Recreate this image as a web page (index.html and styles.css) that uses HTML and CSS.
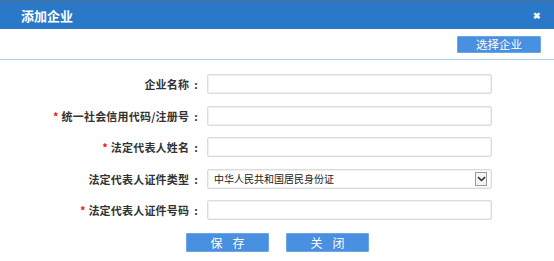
FILE: index.html
```html
<!DOCTYPE html>
<html>
<head>
    <meta charset="UTF-8">
    <title>添加企业</title>
    <link rel="stylesheet" href="styles.css">
</head>
<body>
    <div class="dialog">
        <!-- Title bar -->
        <div class="titlebar">
            <span class="title">添加企业</span>
            <span class="close">&#10006;</span>
        </div>

        <!-- Toolbar -->
        <div class="toolbar">
            <button class="btn btn-pick">选择企业</button>
        </div>

        <!-- Form -->
        <form class="form">
            <label class="label">企业名称<span class="colon">:</span></label>
            <input class="field" type="text">

            <label class="label"><span class="req">*</span> 统一社会信用代码/注册号<span class="colon">:</span></label>
            <input class="field" type="text">

            <label class="label"><span class="req">*</span> 法定代表人姓名<span class="colon">:</span></label>
            <input class="field" type="text">

            <label class="label">法定代表人证件类型<span class="colon">:</span></label>
            <div class="field select">
                <span>中华人民共和国居民身份证</span>
                <span class="arrow">
                    <svg width="9" height="6" viewBox="0 0 9 6"><path d="M1 1.2 L4.5 4.5 L8 1.2" fill="none" stroke="#333" stroke-width="1.6"/></svg>
                </span>
            </div>

            <label class="label"><span class="req">*</span> 法定代表人证件号码<span class="colon">:</span></label>
            <input class="field" type="text">
        </form>

        <div class="actions">
            <button class="btn btn-main">保存</button>
            <button class="btn btn-main">关闭</button>
        </div>
    </div>
</body>
</html>
```

FILE: styles.css
```css
body {
    margin: 0;
    font-family: "Noto Sans CJK SC", "Liberation Sans", sans-serif;
    background-color: #fff;
    color: #333;
}
.dialog {
    width: 554px;
    height: 261px;
}
.titlebar {
    height: 28px;
    background-color: #2a79c9;
    border-top: 1px solid #4f6f92;
    display: flex;
    align-items: center;
    justify-content: space-between;
    padding: 0 13px 0 21px;
}
.title {
    color: #fff;
    font-size: 13px;
    font-weight: bold;
}
.close {
    color: #fff;
    font-size: 9px;
    font-weight: bold;
}
.toolbar {
    height: 30px;
    border-bottom: 1px solid #a9d4ec;
    display: flex;
    align-items: center;
    justify-content: flex-end;
    padding-right: 13px;
}
.btn {
    font-family: "Noto Sans CJK SC", sans-serif;
    color: #fff;
    border: 1px solid #6aa6e6;
    background-color: #4a90e0;
    border-radius: 1px;
    cursor: pointer;
    padding: 0;
}
.btn-pick {
    width: 84px;
    height: 17px;
    font-size: 11.5px;
    line-height: 15px;
}
.form {
    display: grid;
    grid-template-columns: 202px 285px;
    column-gap: 5px;
    row-gap: 11.5px;
    margin-top: 14px;
}
.label {
    height: 20px;
    line-height: 20px;
    text-align: right;
    font-size: 11px;
    font-weight: bold;
    color: #333;
    letter-spacing: 0.2px;
}
.colon {
    margin-left: 5px;
    margin-right: 4px;
}
.req {
    color: #e02020;
}
.field {
    box-sizing: border-box;
    height: 20px;
    width: 285px;
    margin: 0;
    border: 1px solid #dcdcdc;
    box-shadow: inset 0 0 0 1px #f0f0f0;
    border-radius: 2px;
    background: #fff;
}
.select {
    display: flex;
    align-items: center;
    justify-content: space-between;
    padding: 0 4px 0 6px;
    font-size: 10px;
    color: #222;
}
.arrow {
    box-sizing: border-box;
    width: 12px;
    height: 14px;
    border: 1px solid #9a9a9a;
    background: #f4f4f4;
    display: flex;
    align-items: center;
    justify-content: center;
}
.actions {
    display: flex;
    justify-content: center;
    gap: 17px;
    margin-top: 13px;
    padding-left: 1px;
}
.btn-main {
    width: 83px;
    height: 19px;
    font-size: 12px;
    line-height: 17px;
    letter-spacing: 10px;
    text-indent: 10px;
}
```
